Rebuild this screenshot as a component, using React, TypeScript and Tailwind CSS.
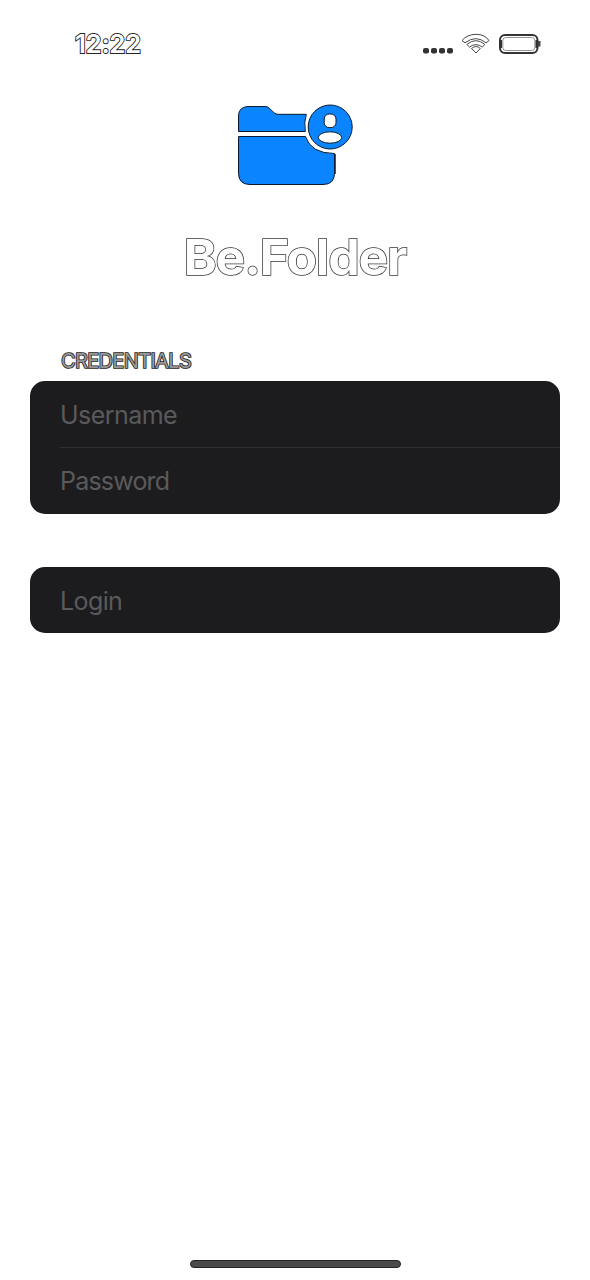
function StatusBar() {
  return (
    <header className="flex h-[88px] items-start pl-[75px] pr-[48px] pt-[28px]">
      <div className="text-[26px] font-semibold leading-[32px] tracking-[-0.4px] text-white [-webkit-text-stroke:1.8px_#222] [paint-order:stroke]">
        12:22
      </div>
      <svg className="ml-auto" width="120" height="32" viewBox="422 28 120 32" fill="none">
        <g fill="#333">
          <rect x="423" y="48" width="6" height="5.5" rx="2" />
          <rect x="431" y="48" width="6" height="5.5" rx="2" />
          <rect x="439" y="48" width="6" height="5.5" rx="2" />
          <rect x="447" y="48" width="6" height="5.5" rx="2" />
        </g>
        <g stroke="#333" strokeWidth="0.9" fill="#fff" strokeLinejoin="round">
          <path d="M462 40.5 Q467 34.5 476 34.3 Q485 34.5 489 40.5 L486 42.8 Q476 34.5 465 42.8Z" />
          <path d="M466.8 44.5 Q476 36.8 484.8 44.5 L482.2 47 Q476 42.3 469.5 47Z" />
          <path d="M471.5 48.5 Q476 44.5 480.3 48.5 L476 53Z" />
        </g>
        <rect x="500" y="35" width="37.5" height="18" rx="5" stroke="#333" strokeWidth="2" />
        <rect x="502.8" y="37.5" width="32" height="13" rx="3" stroke="#777" strokeWidth="0.8" />
        <path d="M501 40v8M536.5 40v8" stroke="#333" strokeWidth="2" />
        <path d="M538 41h2.5v5.5H538z" fill="#444" />
      </svg>
    </header>
  );
}

function Logo() {
  return (
    <svg width="124" height="90" viewBox="233 100 124 90" fill="#0a84ff" stroke="#0b1a2c" strokeWidth="1" strokeLinejoin="round">
      <path d="M238.5 131.5V114.5Q239.5 107 248 106.5H265C271 106.5 272 114.3 278.5 114.3H306.3Q303.8 122 305.3 131.5Z" />
      <path d="M238.5 136.5H305.5Q311 153.5 334.5 153.5V173Q334.5 184.5 323 184.5H250Q238.5 184.5 238.5 173Z" />
      <circle cx="330.2" cy="127" r="22" />
      <rect x="324.2" y="114" width="11.8" height="13.6" rx="5" fill="#fff" />
      <ellipse cx="330" cy="137.5" rx="11.7" ry="5.7" fill="#fff" />
      <path d="M335 154v20" strokeWidth="1.5" />
    </svg>
  );
}

const fieldClass =
  "block w-full bg-transparent pt-[2px] text-[25px] text-white outline-none placeholder:text-[#5a5a5c] placeholder:opacity-100";

export default function App() {
  return (
    <div className="flex h-[1280px] w-[590px] flex-col bg-white font-['Inter','Liberation_Sans',sans-serif]">
      <StatusBar />
      <main className="flex flex-1 flex-col px-[30px] pt-[12px]">
        <div className="flex justify-center">
          <Logo />
        </div>
        <h1 className="mt-[36px] text-center text-[50px] font-bold leading-[62px] tracking-[-1.2px] text-white [-webkit-text-stroke:1.5px_#333] [paint-order:stroke]">
          Be.Folder
        </h1>
        <h2 className="mt-[61px] pl-[31px] text-[20px] leading-[24px] tracking-[-0.65px] text-[#999] [-webkit-text-stroke:1.6px_#222] [paint-order:stroke]">
          CREDENTIALS
        </h2>
        <form className="mt-[8px]">
          <div className="h-[133px] rounded-[15px] bg-[#1c1c1e] pl-[30px]">
            <input type="text" placeholder="Username" aria-label="Username" className={`${fieldClass} h-[66px] tracking-[-0.55px]`} />
            <div className="h-px bg-[#2f2f31]" />
            <input type="password" placeholder="Password" aria-label="Password" className={`${fieldClass} h-[64px] tracking-[-0.8px]`} />
          </div>
          <button
            type="button"
            className="mt-[53px] block h-[66px] w-full rounded-[15px] bg-[#1c1c1e] pl-[30px] pt-[4px] text-left text-[25px] tracking-[-0.6px] text-[#5a5a5c]"
          >
            Login
          </button>
        </form>
      </main>
      <footer className="flex justify-center pb-[12px]">
        <div className="h-[8px] w-[211px] rounded-full border border-[#252525] bg-[#4a4a4a]" />
      </footer>
    </div>
  );
}
